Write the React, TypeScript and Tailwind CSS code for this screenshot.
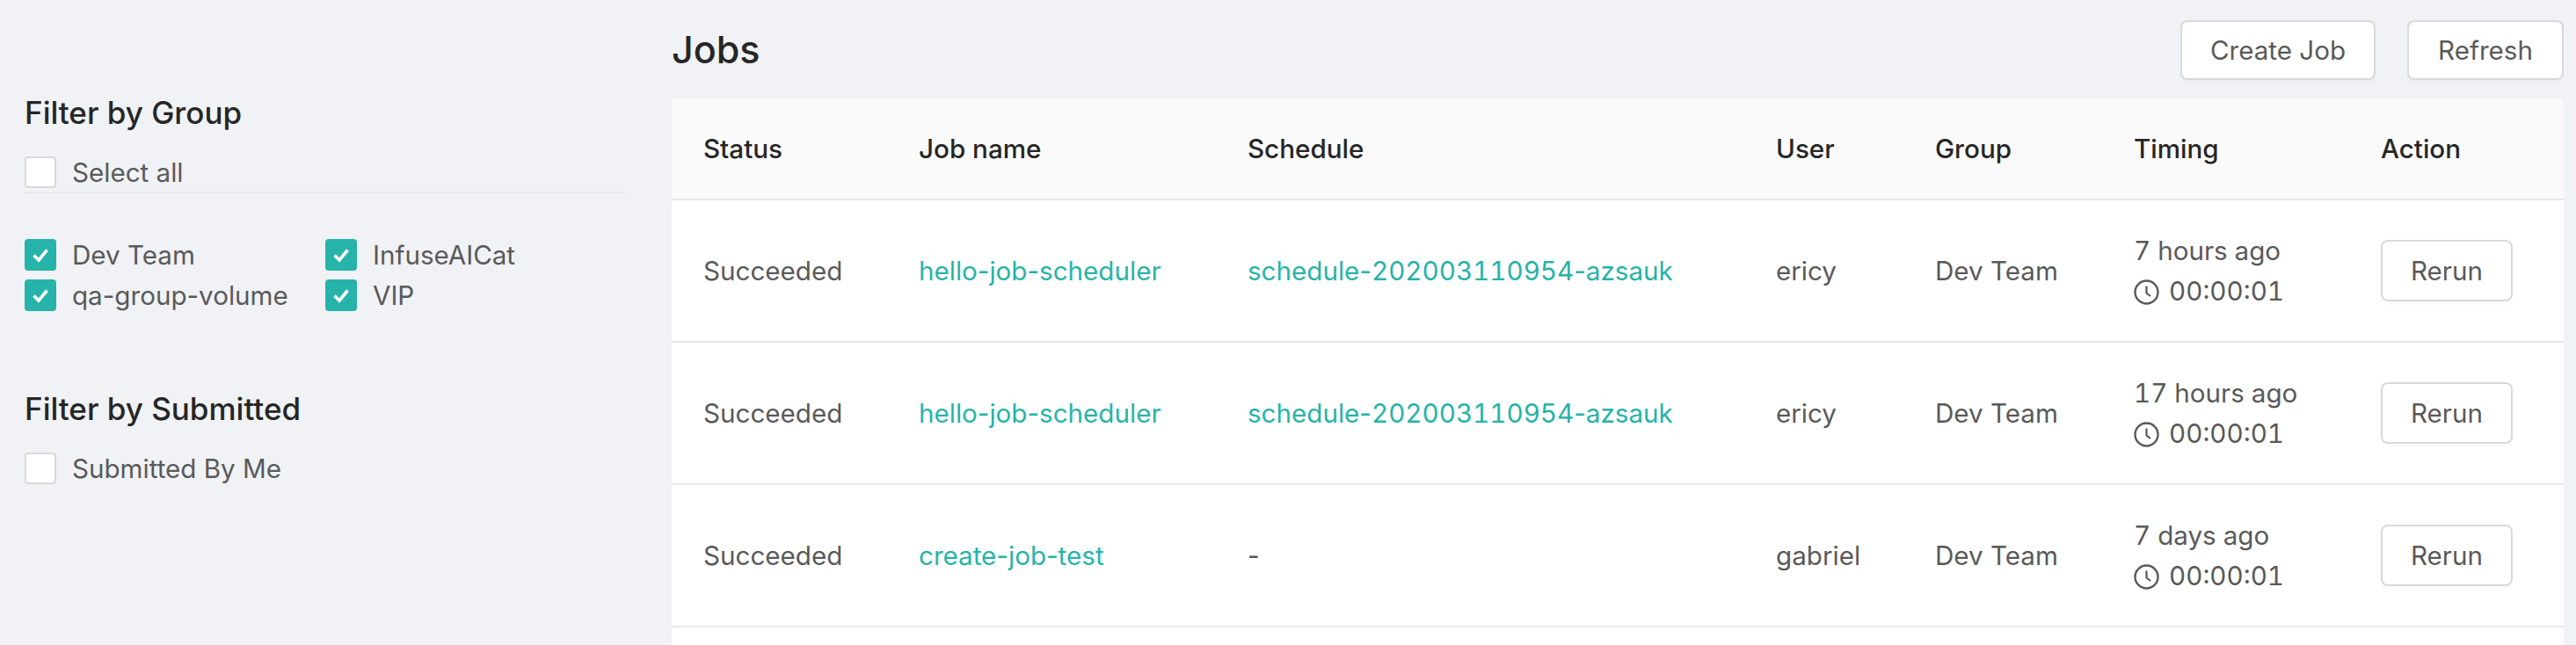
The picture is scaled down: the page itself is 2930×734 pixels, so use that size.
const jobs = [
  { name: 'hello-job-scheduler', schedule: '202003110954', user: 'ericy', ago: '7 hours ago' },
  { name: 'hello-job-scheduler', schedule: '202003110954', user: 'ericy', ago: '17 hours ago' },
  { name: 'create-job-test', schedule: '', user: 'gabriel', ago: '7 days ago' },
];

function Check({ checked, label }: { checked?: boolean; label: string }) {
  return (
    <label className="flex items-center">
      {checked ? (
        <span className="w-[36px] h-[36px] rounded-[4px] bg-[#26b3a9] flex items-center justify-center shrink-0">
          <svg width="22" height="22" viewBox="0 0 22 22" fill="none">
            <path d="M3.5 11.5 L9 17 L18.5 5.5" stroke="white" strokeWidth="3.6" />
          </svg>
        </span>
      ) : (
        <span className="w-[36px] h-[36px] rounded-[4px] bg-white border-2 border-[#d9d9d9] shrink-0" />
      )}
      <span className="ml-[18px] leading-[36px] text-[29.6px] text-[#595959]">{label}</span>
    </label>
  );
}

function ClockIcon() {
  return (
    <svg width="29" height="29" viewBox="0 0 29 29" fill="none" className="shrink-0 mt-[3px]">
      <circle cx="14.5" cy="14.5" r="13" stroke="#595959" strokeWidth="2.4" />
      <path d="M14.5 7.5 V15.5 L19 19" stroke="#595959" strokeWidth="2.2" />
    </svg>
  );
}

function Btn({ label, className }: { label: string; className: string }) {
  return (
    <button className={`bg-white border-2 border-[#d9d9d9] rounded-[8px] text-[29.6px] text-[#595959] shadow-[0_4px_0_rgba(0,0,0,0.015)] ${className}`}>
      {label}
    </button>
  );
}

const th = 'pl-[36px] text-left font-medium text-[29.6px] text-[#262626] align-middle';
const td = 'pl-[36px] text-[29.6px] align-middle border-b-2 border-[#e8e8e8]';

export default function App() {
  return (
    <div className="flex h-[734px] overflow-hidden bg-[#f0f2f5] font-['Inter',sans-serif]">
      <aside className="w-[764px] shrink-0 pl-[28px] pr-[52px] pt-[104px]">
        <h2 className="text-[35px] leading-[48px] font-medium text-[#262626]">Filter by Group</h2>
        <div className="mt-[26px] pb-[4px] border-b-2 border-[#e8e8e8]">
          <Check label="Select all" />
        </div>
        <div className="mt-[52px] grid grid-cols-[342px_1fr] gap-y-[10px]">
          <Check checked label="Dev Team" />
          <Check checked label="InfuseAICat" />
          <Check checked label="qa-group-volume" />
          <Check checked label="VIP" />
        </div>
        <h2 className="mt-[87px] text-[35px] leading-[48px] font-medium text-[#262626]">Filter by Submitted</h2>
        <div className="mt-[26px]">
          <Check label="Submitted By Me" />
        </div>
      </aside>
      <main className="flex-1 min-w-0 pr-[14px] flex flex-col">
        <div className="h-[112px] flex items-start justify-between pt-[23px]">
          <h1 className="text-[43px] leading-[66px] font-medium text-[#262626]">Jobs</h1>
          <div className="flex gap-[36px]">
            <Btn label="Create Job" className="w-[222px] h-[68px]" />
            <Btn label="Refresh" className="w-[178px] h-[68px]" />
          </div>
        </div>
        <div className="flex-1 bg-white rounded-t-[6px] overflow-hidden">
          <table className="w-full table-fixed border-collapse">
            <colgroup>
              <col className="w-[245px]" />
              <col className="w-[374px]" />
              <col className="w-[601px]" />
              <col className="w-[181px]" />
              <col className="w-[226px]" />
              <col className="w-[281px]" />
              <col className="w-[244px]" />
            </colgroup>
            <thead>
              <tr className="h-[115px] bg-[#fafafa] border-b-2 border-[#e8e8e8]">
                {['Status', 'Job name', 'Schedule', 'User', 'Group', 'Timing', 'Action'].map((h) => (
                  <th key={h} className={th}>{h}</th>
                ))}
              </tr>
            </thead>
            <tbody>
              {jobs.map((job, i) => (
                <tr key={i} className="h-[162px]">
                  <td className={`${td} text-[#595959]`}>Succeeded</td>
                  <td className={`${td} text-[#26b3a9]`}>{job.name}</td>
                  {job.schedule ? (
                    <td className={`${td} text-[#26b3a9]`}>
                      schedule-<span className="tabular-nums">{job.schedule}</span>-azsauk
                    </td>
                  ) : (
                    <td className={`${td} text-[#595959]`}>-</td>
                  )}
                  <td className={`${td} text-[#595959]`}>{job.user}</td>
                  <td className={`${td} text-[#595959]`}>Dev Team</td>
                  <td className={`${td} text-[#595959]`}>
                    <div className="leading-[46px] tabular-nums">{job.ago}</div>
                    <div className="flex items-center gap-[11px] leading-[46px]">
                      <ClockIcon />
                      <span className="tabular-nums">00:00:01</span>
                    </div>
                  </td>
                  <td className={td}>
                    <Btn label="Rerun" className="w-[150px] h-[70px] block" />
                  </td>
                </tr>
              ))}
            </tbody>
          </table>
        </div>
      </main>
    </div>
  );
}
